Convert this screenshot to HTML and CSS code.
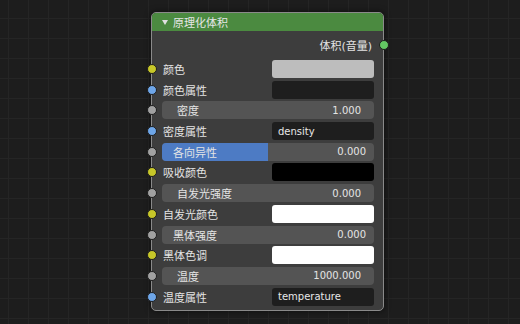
FILE: index.html
```html
<!DOCTYPE html>
<html lang="zh">
<head>
    <meta charset="UTF-8">
    <title>原理化体积</title>
    <link rel="stylesheet" href="styles.css">
</head>
<body>
    <div class="canvas">
        <div class="node">
            <div class="node-header"><span class="arrow"></span>原理化体积</div>
            <div class="node-body">
                <div class="row row-out">
                    <span class="label">体积(音量)</span>
                    <i class="socket socket-out green"></i>
                </div>

                <div class="row">
                    <i class="socket yellow"></i>
                    <span class="label">颜色</span>
                    <span class="field swatch-gray"></span>
                </div>
                <div class="row">
                    <i class="socket blue"></i>
                    <span class="label">颜色属性</span>
                    <span class="field text-field"></span>
                </div>
                <div class="row">
                    <i class="socket gray"></i>
                    <div class="slider wide">
                        <span class="slider-label">密度</span>
                        <span class="slider-value">1.000</span>
                    </div>
                </div>
                <div class="row">
                    <i class="socket blue"></i>
                    <span class="label">密度属性</span>
                    <span class="field text-field">density</span>
                </div>
                <div class="row">
                    <i class="socket gray"></i>
                    <div class="slider narrow">
                        <span class="slider-fill" style="width: 50%"></span>
                        <span class="slider-label">各向异性</span>
                        <span class="slider-value">0.000</span>
                    </div>
                </div>
                <div class="row">
                    <i class="socket yellow"></i>
                    <span class="label">吸收颜色</span>
                    <span class="field swatch-black"></span>
                </div>
                <div class="row">
                    <i class="socket gray"></i>
                    <div class="slider wide">
                        <span class="slider-label">自发光强度</span>
                        <span class="slider-value">0.000</span>
                    </div>
                </div>
                <div class="row">
                    <i class="socket yellow"></i>
                    <span class="label">自发光颜色</span>
                    <span class="field swatch-white"></span>
                </div>
                <div class="row">
                    <i class="socket gray"></i>
                    <div class="slider narrow">
                        <span class="slider-label">黑体强度</span>
                        <span class="slider-value">0.000</span>
                    </div>
                </div>
                <div class="row">
                    <i class="socket yellow"></i>
                    <span class="label">黑体色调</span>
                    <span class="field swatch-white"></span>
                </div>
                <div class="row">
                    <i class="socket gray"></i>
                    <div class="slider wide">
                        <span class="slider-label">温度</span>
                        <span class="slider-value">1000.000</span>
                    </div>
                </div>
                <div class="row">
                    <i class="socket blue"></i>
                    <span class="label">温度属性</span>
                    <span class="field text-field">temperature</span>
                </div>
            </div>
        </div>
    </div>
</body>
</html>
```

FILE: styles.css
```css
body {
    margin: 0;
    padding: 0;
    font-family: "DejaVu Sans", "Noto Sans CJK SC", sans-serif;
    font-size: 10px;
    color: #e4e4e4;
}
.canvas {
    width: 520px;
    height: 324px;
    box-sizing: border-box;
    padding: 12px 0 0 151px;
    background-color: #1d1d1d;
    background-image:
        linear-gradient(to right, #252525 1px, transparent 1px),
        linear-gradient(to bottom, #252525 1px, transparent 1px);
    background-size: 20px 20px;
    background-position: 8px 18px;
    overflow: hidden;
}
.node {
    width: 233px;
    height: 299px;
    box-sizing: border-box;
    border: 1px solid #8a8a8a;
    border-radius: 5px;
    background-color: #3d3d3d;
    box-shadow: 0 0 6px rgba(0, 0, 0, 0.6);
}
.node-header {
    height: 18px;
    display: flex;
    align-items: center;
    padding-left: 10px;
    background-color: #4b8a40;
    border-radius: 4px 4px 0 0;
    color: #e6e6e6;
    font-size: 11px;
}
.arrow {
    width: 0;
    height: 0;
    border-left: 3px solid transparent;
    border-right: 3px solid transparent;
    border-top: 5px solid #e0e0e0;
    margin-right: 5px;
}
.node-body {
    padding-top: 4px;
}
.row {
    position: relative;
    height: 20.7px;
    display: flex;
    align-items: center;
    padding: 0 9px 0 10px;
}
.row-out {
    justify-content: flex-end;
    padding-right: 11px;
    margin-bottom: 3px;
}
.label {
    flex: 1;
    padding-left: 1px;
    font-size: 11px;
}
.row-out .label {
    flex: none;
}
.socket {
    position: absolute;
    top: 50%;
    left: -5px;
    width: 8px;
    height: 8px;
    margin-top: -5px;
    border: 1px solid #1e1e1e;
    border-radius: 50%;
}
.socket-out {
    left: auto;
    right: -6px;
}
.green { background-color: #63c763; }
.yellow { background-color: #c7c729; }
.blue { background-color: #6ea6e8; }
.gray { background-color: #a1a1a1; }
.field {
    width: 102px;
    height: 18px;
    box-sizing: border-box;
    border-radius: 3px;
    display: flex;
    align-items: center;
    padding-left: 6px;
}
.swatch-gray { background-color: #bdbdbd; }
.swatch-black { background-color: #000; }
.swatch-white { background-color: #fff; }
.text-field {
    background-color: #1e1e1e;
    color: #e8e8e8;
}
.slider {
    position: relative;
    flex: 1;
    height: 18px;
    display: flex;
    align-items: center;
    justify-content: space-between;
    background-color: #545454;
    border-radius: 4px;
    overflow: hidden;
}
.slider.wide {
    padding: 0 13px 0 15px;
}
.slider.narrow {
    padding: 0 8px 0 11px;
}
.slider-fill {
    position: absolute;
    left: 0;
    top: 0;
    bottom: 0;
    background-color: #4d7bc4;
}
.slider-label {
    position: relative;
    font-size: 11px;
}
.slider-value {
    position: relative;
}
```
